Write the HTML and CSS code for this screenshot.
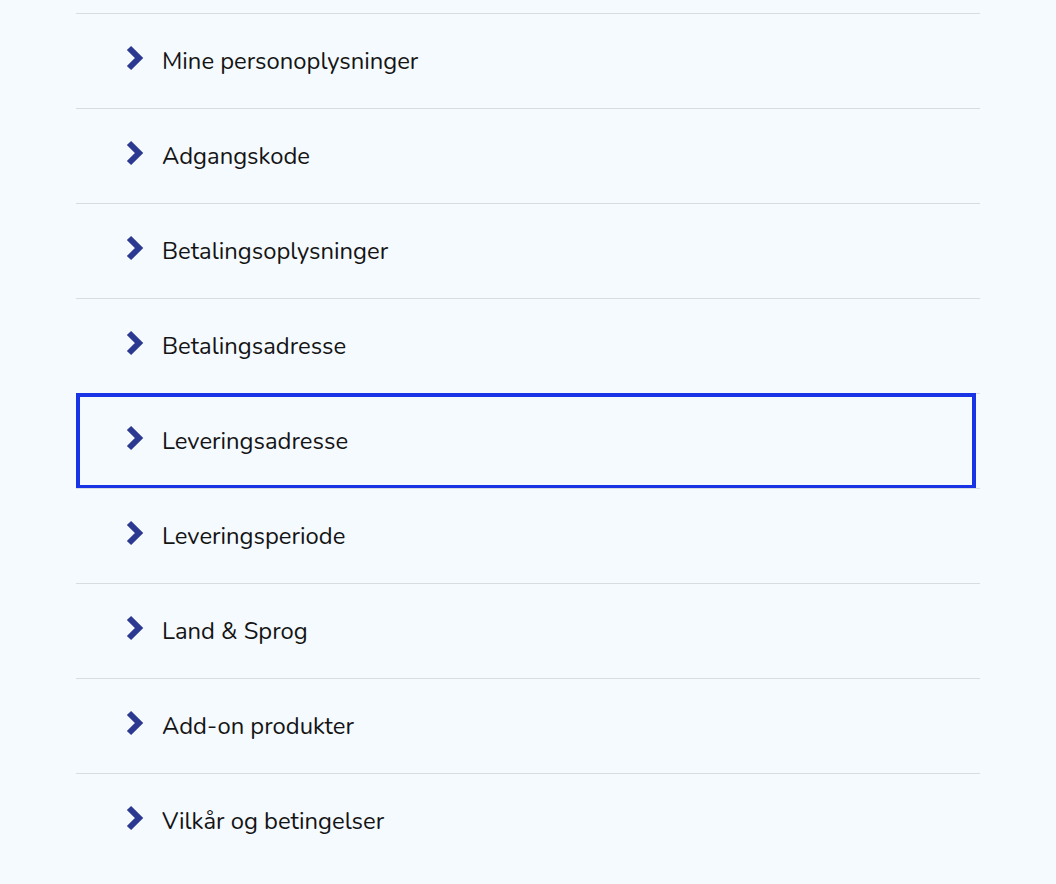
FILE: index.html
```html
<!DOCTYPE html>
<html lang="da">
<head>
<meta charset="utf-8">
<title>Konto</title>
<link rel="stylesheet" href="styles.css">
</head>
<body>
<ul class="menu">
  <li class="item"><a class="link" href="#"><svg class="chev" viewBox="0 0 18 26"><polyline points="3,3 13,13 3,23"/></svg><span>Mine personoplysninger</span></a></li>
  <li class="item"><a class="link" href="#"><svg class="chev" viewBox="0 0 18 26"><polyline points="3,3 13,13 3,23"/></svg><span>Adgangskode</span></a></li>
  <li class="item"><a class="link" href="#"><svg class="chev" viewBox="0 0 18 26"><polyline points="3,3 13,13 3,23"/></svg><span>Betalingsoplysninger</span></a></li>
  <li class="item"><a class="link" href="#"><svg class="chev" viewBox="0 0 18 26"><polyline points="3,3 13,13 3,23"/></svg><span>Betalingsadresse</span></a></li>
  <li class="item focused"><a class="link" href="#"><svg class="chev" viewBox="0 0 18 26"><polyline points="3,3 13,13 3,23"/></svg><span>Leveringsadresse</span></a></li>
  <li class="item"><a class="link" href="#"><svg class="chev" viewBox="0 0 18 26"><polyline points="3,3 13,13 3,23"/></svg><span>Leveringsperiode</span></a></li>
  <li class="item"><a class="link" href="#"><svg class="chev" viewBox="0 0 18 26"><polyline points="3,3 13,13 3,23"/></svg><span>Land &amp; Sprog</span></a></li>
  <li class="item"><a class="link" href="#"><svg class="chev" viewBox="0 0 18 26"><polyline points="3,3 13,13 3,23"/></svg><span>Add-on produkter</span></a></li>
  <li class="item"><a class="link" href="#"><svg class="chev" viewBox="0 0 18 26"><polyline points="3,3 13,13 3,23"/></svg><span>Vilkår og betingelser</span></a></li>
</ul>
</body>
</html>
```
FILE: styles.css
```css
html, body {
  margin: 0;
  padding: 0;
  background: #f5faff;
}
body {
  padding-top: 13px;
  font-family: "Nunito", Lato, "Open Sans", sans-serif;
  color: #141414;
}
.menu {
  list-style: none;
  margin: 0 0 0 76px;
  padding: 0;
  width: 904px;
}
.item {
  position: relative;
  border-top: 1px solid #d8dce1;
}
.link {
  display: flex;
  align-items: center;
  height: 94px;
  padding-left: 50px;
  gap: 18px;
  text-decoration: none;
  color: #141414;
  font-size: 23.8px;
}
.chev {
  width: 18px;
  height: 26px;
  flex: none;
  margin-bottom: 6px;
}
.chev polyline {
  fill: none;
  stroke: #2b3990;
  stroke-width: 6;
  stroke-linecap: butt;
  stroke-linejoin: miter;
}
.focused::after {
  content: "";
  position: absolute;
  left: 0;
  right: 4px;
  top: -1px;
  bottom: -1px;
  border: 4px solid #1834e4;
  pointer-events: none;
}
```
